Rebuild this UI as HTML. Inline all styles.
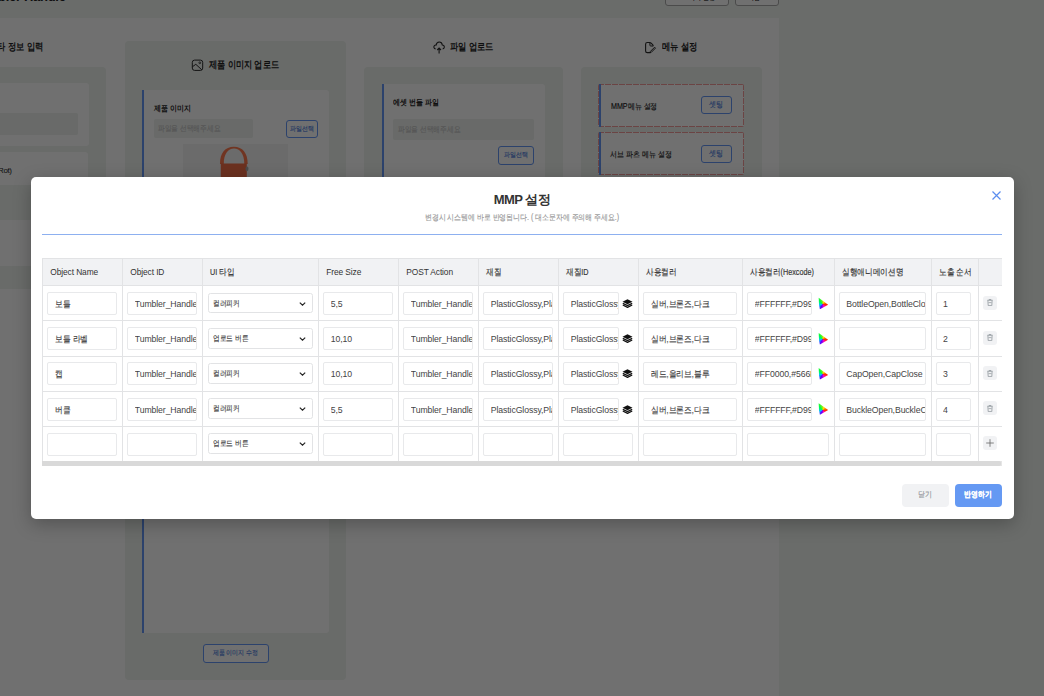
<!DOCTYPE html>
<html><head><meta charset="utf-8">
<style>
*{box-sizing:border-box;margin:0;padding:0}
html,body{width:1044px;height:696px;overflow:hidden}
body{font-family:"Liberation Sans",sans-serif;background:#f2f6f2;position:relative;color:#222}
.abs{position:absolute}
#page{position:absolute;left:0;top:0;width:1044px;height:696px}
.container{position:absolute;left:-20px;top:17.5px;width:799px;height:700px;background:#fff}
.sec{position:absolute;background:#eff3ef;border-radius:4px}
.card{position:absolute;background:#fff;border-left:2px solid #6497f5;border-radius:0 3px 3px 0}
.lbl{position:absolute;font-size:7.9px;font-weight:bold;color:#222;white-space:nowrap}
.fin{position:absolute;background:#eef1ee;border-radius:2px;font-size:7.7px;color:#c4c4c4;padding-left:4.5px;white-space:nowrap}
.obtn{position:absolute;border:1px solid #6497f5;border-radius:3px;background:#fff;color:#4f7fe0;font-size:7.5px;text-align:center;white-space:nowrap}
.stitle{position:absolute;font-size:11px;font-weight:bold;color:#222;white-space:nowrap}
.mcard{position:absolute;background:
 repeating-linear-gradient(90deg,#f39c9c 0 6px,transparent 6px 7px) 0 0/100% 1px no-repeat,
 repeating-linear-gradient(90deg,#f39c9c 0 6px,transparent 6px 7px) 0 100%/100% 1px no-repeat,
 repeating-linear-gradient(180deg,#f39c9c 0 6px,transparent 6px 7px) 0 0/1px 100% no-repeat,
 repeating-linear-gradient(180deg,#f39c9c 0 6px,transparent 6px 7px) 100% 0/1px 100% no-repeat,#fff;border-radius:2px}
.mcard::before{content:"";position:absolute;left:1px;top:0;bottom:0;width:2px;background:#6497f5}
#overlay{position:absolute;left:0;top:0;width:1044px;height:696px;background:rgba(0,0,0,0.56)}
#modal{position:absolute;left:31px;top:177px;width:983px;height:342px;background:#fff;border-radius:5px;box-shadow:0 5px 18px rgba(0,0,0,0.26)}

.hl{position:absolute;left:0;height:1px;background:#e2e3e5}
.vl{position:absolute;top:0;width:1px;background:#e2e3e5}
.th{position:absolute;font-size:8.4px;color:#333;white-space:nowrap;letter-spacing:-0.1px}
.inp{position:absolute;height:23px;border:1px solid #e8e9eb;border-radius:2px;background:#fff;overflow:hidden;white-space:nowrap;font-size:8.7px;color:#444;line-height:22px;padding-left:6.5px;letter-spacing:-0.1px}
.inp>span{display:block;overflow:hidden}
.sel{position:absolute;border:1px solid #e2e3e5;border-radius:2.5px;background:#fff;white-space:nowrap;font-size:7.8px;color:#555;line-height:19.5px;padding-left:3.5px;letter-spacing:0;color:#444}
.chev{position:absolute;right:6px;top:8px}
.ibtn{position:absolute;width:14.1px;height:14px;background:#f1f2f4;border-radius:3px;display:flex;align-items:center;justify-content:center}
.ico{position:absolute}
.kr{display:inline-block;transform-origin:0 50%;letter-spacing:0;-webkit-text-stroke:0.15px currentColor}
.lbl .kr,.stitle .kr{-webkit-text-stroke:0}
.cw{width:12px;height:13px;background:conic-gradient(from 0deg at 38% 55%, #ffe000 30deg, #ff2a00 95deg, #ff00c8 150deg, #5a00ff 205deg, #00c8ff 255deg, #00ff3c 320deg, #ffe000 390deg);clip-path:polygon(9% 5%, 88% 58%, 19% 94%, 12% 60%)}
.mtitle{position:absolute;left:0;width:984px;text-align:center;font-size:13px;font-weight:bold;color:#333;letter-spacing:-0.5px;white-space:nowrap}
.msub{position:absolute;left:0;width:984px;text-align:center;font-size:8.2px;color:#999;white-space:nowrap}
.btn{position:absolute;border-radius:4px;font-size:8px;text-align:center;white-space:nowrap}
</style></head>
<body>
<div id="page">
  <div class="abs" style="left:-60px;top:-11px;font-size:13px;font-weight:bold;color:#222;white-space:nowrap;letter-spacing:-0.3px">MMP Tumbler Handle</div>
  <div class="abs" style="left:665px;top:-14px;width:64px;height:19.5px;border:1px solid #aaa;border-radius:3px;background:#fff;font-size:7px;color:#222;text-align:right;padding-right:13px;line-height:22px;white-space:nowrap"><span class="kr" style="transform:scaleX(0.85);transform-origin:100% 50%">미리 설정</span></div>
  <div class="abs" style="left:735px;top:-14px;width:44px;height:19.5px;border:1px solid #aaa;border-radius:3px;background:#fff;font-size:7px;color:#222;text-align:center;padding-right:6px;line-height:22px;white-space:nowrap"><span class="kr" style="transform:scaleX(0.85);transform-origin:50% 50%">저장</span></div>
  <div class="container"></div>

  <!-- left section -->
  <div class="stitle" style="left:-11px;top:41px;font-size:9.5px"><span class="kr" style="transform:scaleX(0.83)">기타 정보 입력</span></div>
  <div class="sec" style="left:-40px;top:66.5px;width:146px;height:222px"></div>
  <div class="abs" style="left:-30px;top:83px;width:119px;height:63px;background:#fff;border-radius:3px"></div>
  <div class="abs" style="left:-20px;top:112.5px;width:97.5px;height:22.5px;background:#eef1ee;border-radius:2px"></div>
  <div class="abs" style="left:-30px;top:152px;width:118px;height:33px;background:#fff;border-radius:3px"></div>
  <div class="abs" style="left:-30px;top:220px;width:118px;height:46px;background:#fff;border-radius:3px"></div>
  <div class="abs" style="left:-2px;top:165.5px;font-size:8px;color:#222;white-space:nowrap;letter-spacing:-0.4px">Rot)</div>

  <!-- product image section -->
  <div class="sec" style="left:124.5px;top:41px;width:221.5px;height:638.5px"></div>
  <svg class="abs" style="left:191px;top:59px" width="13" height="13" viewBox="0 0 13 13"><rect x="1.3" y="1.1" width="10.4" height="10.3" rx="2.3" fill="none" stroke="#2a2a2a" stroke-width="1"/><path d="M1.5 7.7 L4.8 5.3 L10.8 10.8" fill="none" stroke="#2a2a2a" stroke-width="1"/><circle cx="8.8" cy="3.8" r="0.9" fill="none" stroke="#2a2a2a" stroke-width="0.8"/></svg>
  <div class="stitle" style="left:209px;top:58.5px;font-size:9.7px"><span class="kr" style="transform:scaleX(0.82)">제품 이미지 업로드</span></div>
  <div class="card" style="left:142px;top:89.5px;width:186.5px;height:543px"></div>
  <div class="lbl" style="left:153.5px;top:103px"><span class="kr" style="transform:scaleX(0.87)">제품 이미지</span></div>
  <div class="fin" style="left:153.5px;top:119px;width:99px;height:19px;line-height:19px"><span class="kr" style="transform:scaleX(0.84)">파일을 선택해주세요</span></div>
  <div class="obtn" style="left:285.5px;top:119.5px;width:32px;height:18px;line-height:16px;font-size:6.8px"><span class="kr" style="transform:scaleX(0.85);transform-origin:50% 50%">파일선택</span></div>
  <svg class="abs" style="left:183px;top:144px" width="105" height="370" viewBox="0 0 105 370"><rect width="105" height="370" fill="#f3f3f3"/>
    <path d="M37 20 C37 9 42 2.8 50.9 2.8 C59.5 2.8 64.7 9 64.7 20 L61.3 20 C61.3 10 57 4.6 51 4.6 C45 4.6 40.8 10 40.8 20 Z" fill="#ff7a4e"/>
    <rect x="37.8" y="19.5" width="26" height="40" fill="#f3704a"/>
    <ellipse cx="64" cy="24.8" rx="1.5" ry="2.4" fill="#aaa"/></svg>
  <div class="obtn" style="left:202.5px;top:644px;width:66.5px;height:18.5px;line-height:16.5px;font-size:6.8px"><span class="kr" style="transform:scaleX(0.85);transform-origin:50% 50%">제품 이미지 수정</span></div>

  <!-- file upload section -->
  <svg class="abs" style="left:432px;top:40px" width="14" height="14" viewBox="0 0 14 14"><path d="M3.6 8.9 C1.8 8.7 1.4 6.8 2.4 5.7 C3 5.1 3.8 5 4.1 5.1 C4.4 3.1 5.6 2 7.2 2 C8.8 2 10.1 3.2 10.3 5 C11.6 5 12.4 6 12.3 7.2 C12.2 8.3 11.5 8.8 10.7 8.9" fill="none" stroke="#2a2a2a" stroke-width="1.1"/><path d="M5.2 10 L7.1 8 L9 10 M7.1 8.3 V13.5" fill="none" stroke="#2a2a2a" stroke-width="1.1"/></svg>
  <div class="stitle" style="left:450px;top:41px;font-size:9.5px"><span class="kr" style="transform:scaleX(0.83)">파일 업로드</span></div>
  <div class="sec" style="left:364px;top:66.5px;width:199px;height:300px"></div>
  <div class="card" style="left:381.5px;top:84px;width:163px;height:200px"></div>
  <div class="lbl" style="left:393px;top:97px"><span class="kr" style="transform:scaleX(0.87)">에셋 번들 파일</span></div>
  <div class="fin" style="left:393px;top:119px;width:141px;height:21px;line-height:21px"><span class="kr" style="transform:scaleX(0.84)">파일을 선택해주세요</span></div>
  <div class="obtn" style="left:497.5px;top:146px;width:36.5px;height:18.5px;line-height:16.5px;font-size:6.8px"><span class="kr" style="transform:scaleX(0.85);transform-origin:50% 50%">파일선택</span></div>

  <!-- menu section -->
  <svg class="abs" style="left:644px;top:41px" width="13" height="13" viewBox="0 0 13 13"><path d="M6.6 11.6 H3.3 C2.2 11.6 1.6 11 1.6 9.9 V3.2 C1.6 2.1 2.2 1.5 3.3 1.5 H5.7 C6.3 1.5 6.7 1.7 7.1 2.1 L8.6 3.6 C9 4 9.2 4.4 9.2 5 V5.3" fill="none" stroke="#2a2a2a" stroke-width="1.1"/><path d="M5.9 1.8 V4.2 C5.9 4.8 6.3 5 6.8 5 H9" fill="none" stroke="#2a2a2a" stroke-width="1"/><path d="M10.6 6.2 L11.5 7.1 L7.3 11.3 L6.1 11.6 L6.4 10.4 Z" fill="none" stroke="#2a2a2a" stroke-width="1"/></svg>
  <div class="stitle" style="left:662px;top:41px;font-size:9.5px"><span class="kr" style="transform:scaleX(0.83)">메뉴 설정</span></div>
  <div class="sec" style="left:581px;top:66.5px;width:180.5px;height:300px"></div>
  <div class="mcard" style="left:598px;top:84px;width:146px;height:43px"></div>
  <div class="abs" style="left:611px;top:100.5px;font-size:8.2px;color:#222;white-space:nowrap"><span class="kr" style="transform:scaleX(0.87)">MMP메뉴 설정</span></div>
  <div class="obtn" style="left:700.5px;top:96px;width:31.5px;height:18px;line-height:16px"><span class="kr" style="transform:scaleX(0.87);transform-origin:50% 50%">셋팅</span></div>
  <div class="mcard" style="left:598px;top:132px;width:146px;height:43px"></div>
  <div class="abs" style="left:610px;top:149px;font-size:8.2px;color:#222;white-space:nowrap"><span class="kr" style="transform:scaleX(0.87)">서브 파츠 메뉴 설정</span></div>
  <div class="obtn" style="left:700.5px;top:144.5px;width:31.5px;height:18px;line-height:16px"><span class="kr" style="transform:scaleX(0.87);transform-origin:50% 50%">셋팅</span></div>
</div>
<div id="overlay"></div>
<div id="modal"><div style="position:absolute;left:-1px;top:0;width:984px;height:342px">
  <div class="mtitle" style="top:14px">MMP 설정</div>
  <div class="msub" style="top:35px"><span class="kr" style="transform:scaleX(0.86);transform-origin:50% 50%">변경시 시스템에 바로 반영됩니다. ( 대소문자에 주의해 주세요.)</span></div>
  <svg style="position:absolute;left:962px;top:14px" width="9" height="9" viewBox="0 0 9 9"><path d="M0.5 0.5 L8.5 8.5 M8.5 0.5 L0.5 8.5" stroke="#5b8def" stroke-width="1.2"/></svg>
  <div style="position:absolute;left:12px;top:57px;width:960px;height:1px;background:#8db0f0"></div>
  <div id="tbl" style="position:absolute;left:12.00px;top:81.00px;width:959.60px;height:208.30px;overflow:hidden">
<div style="position:absolute;left:0;top:0;width:961.00px;height:27.30px;background:#f1f2f4"></div>
<div class="hl" style="top:0.00px;width:961.00px"></div>
<div class="hl" style="top:27.30px;width:961.00px"></div>
<div class="hl" style="top:62.44px;width:961.00px"></div>
<div class="hl" style="top:97.58px;width:961.00px"></div>
<div class="hl" style="top:132.72px;width:961.00px"></div>
<div class="hl" style="top:167.86px;width:961.00px"></div>
<div class="hl" style="top:203.00px;width:961.00px"></div>
<div class="vl" style="left:0.00px;height:203.20px"></div>
<div class="vl" style="left:80.00px;height:203.20px"></div>
<div class="vl" style="left:160.00px;height:203.20px"></div>
<div class="vl" style="left:276.00px;height:203.20px"></div>
<div class="vl" style="left:356.00px;height:203.20px"></div>
<div class="vl" style="left:436.00px;height:203.20px"></div>
<div class="vl" style="left:516.00px;height:203.20px"></div>
<div class="vl" style="left:596.00px;height:203.20px"></div>
<div class="vl" style="left:700.00px;height:203.20px"></div>
<div class="vl" style="left:791.50px;height:203.20px"></div>
<div class="vl" style="left:889.00px;height:203.20px"></div>
<div class="vl" style="left:936.00px;height:203.20px"></div>
<div class="th" style="left:8.30px;top:1px;height:27.30px;line-height:27.30px">Object Name</div>
<div class="th" style="left:88.30px;top:1px;height:27.30px;line-height:27.30px">Object ID</div>
<div class="th" style="left:168.30px;top:1px;height:27.30px;line-height:27.30px"><span class="kr" style="font-size:8.5px;transform:scaleX(0.85)">UI 타입</span></div>
<div class="th" style="left:284.30px;top:1px;height:27.30px;line-height:27.30px">Free Size</div>
<div class="th" style="left:364.30px;top:1px;height:27.30px;line-height:27.30px">POST Action</div>
<div class="th" style="left:444.30px;top:1px;height:27.30px;line-height:27.30px"><span class="kr" style="font-size:8.5px;transform:scaleX(0.85)">재질</span></div>
<div class="th" style="left:524.30px;top:1px;height:27.30px;line-height:27.30px"><span class="kr" style="font-size:8.5px;transform:scaleX(0.85)">재질ID</span></div>
<div class="th" style="left:604.30px;top:1px;height:27.30px;line-height:27.30px"><span class="kr" style="font-size:8.5px;transform:scaleX(0.85)">사용컬러</span></div>
<div class="th" style="left:708.30px;top:1px;height:27.30px;line-height:27.30px"><span class="kr" style="font-size:8.5px;transform:scaleX(0.85)">사용컬러(Hexcode)</span></div>
<div class="th" style="left:799.80px;top:1px;height:27.30px;line-height:27.30px"><span class="kr" style="font-size:8.5px;transform:scaleX(0.85)">실행애니메이션명</span></div>
<div class="th" style="left:897.30px;top:1px;height:27.30px;line-height:27.30px"><span class="kr" style="font-size:8.5px;transform:scaleX(0.85)">노출 순서</span></div>
<div class="inp" style="left:5.30px;top:34.10px;width:70.20px"><span><span class="kr" style="font-size:8.5px;transform:scaleX(0.86)">보틀</span></span></div>
<div class="inp" style="left:85.30px;top:34.10px;width:70.20px"><span>Tumbler_Handle</span></div>
<div class="sel" style="left:166.20px;top:34.90px;width:104.80px;height:20.5px"><span><span class="kr" style="font-size:7.8px;transform:scaleX(0.84)">컬러피커</span></span><svg class="chev" width="7" height="4" viewBox="0 0 7 4"><path d="M0.8 0.6 L3.5 3.2 L6.2 0.6" fill="none" stroke="#222" stroke-width="1.15"/></svg></div>
<div class="inp" style="left:281.30px;top:34.10px;width:70.20px"><span>5,5</span></div>
<div class="inp" style="left:361.30px;top:34.10px;width:70.20px"><span>Tumbler_Handle</span></div>
<div class="inp" style="left:441.30px;top:34.10px;width:70.20px"><span>PlasticGlossy,PlasticMatte</span></div>
<div class="inp" style="left:521.30px;top:34.10px;width:55.70px"><span>PlasticGlossy</span></div>
<svg class="ico" style="left:580.30px;top:41.10px" width="11" height="9" viewBox="0 0 11 9"><path d="M5.5 0.3 L10.5 2.8 L5.5 5.3 L0.5 2.8 Z" fill="#111"/><path d="M0.8 4.3 L5.5 6.6 L10.2 4.3" fill="none" stroke="#111" stroke-width="1.3"/><path d="M0.8 6 L5.5 8.4 L10.2 6" fill="none" stroke="#111" stroke-width="1.3"/></svg>
<div class="inp" style="left:601.30px;top:34.10px;width:94.20px"><span><span class="kr" style="font-size:8.5px;transform:scaleX(0.86)">실버,브론즈,다크</span></span></div>
<div class="inp" style="left:705.30px;top:34.10px;width:65.00px"><span>#FFFFFF,#D9987A</span></div>
<div class="ico cw" style="left:775.60px;top:39.10px"></div>
<div class="inp" style="left:796.80px;top:34.10px;width:87.70px"><span>BottleOpen,BottleClose</span></div>
<div class="inp" style="left:893.60px;top:34.10px;width:35.20px"><span>1</span></div>
<div class="ibtn" style="left:941.30px;top:37.80px"><svg width="6" height="7" viewBox="0 0 6 7"><path d="M0.3 1.3 H5.7 M2 1.2 V0.5 H4 V1.2 M0.9 1.5 L1.2 6.6 H4.8 L5.1 1.5" fill="none" stroke="#9aa0a6" stroke-width="0.9"/><path d="M1.5 3.6 H4.5" stroke="#9aa0a6" stroke-width="0.8"/></svg></div>
<div class="inp" style="left:5.30px;top:69.24px;width:70.20px"><span><span class="kr" style="font-size:8.5px;transform:scaleX(0.86)">보틀 라벨</span></span></div>
<div class="inp" style="left:85.30px;top:69.24px;width:70.20px"><span>Tumbler_Handle</span></div>
<div class="sel" style="left:166.20px;top:70.04px;width:104.80px;height:20.5px"><span><span class="kr" style="font-size:7.8px;transform:scaleX(0.84)">업로드 버튼</span></span><svg class="chev" width="7" height="4" viewBox="0 0 7 4"><path d="M0.8 0.6 L3.5 3.2 L6.2 0.6" fill="none" stroke="#222" stroke-width="1.15"/></svg></div>
<div class="inp" style="left:281.30px;top:69.24px;width:70.20px"><span>10,10</span></div>
<div class="inp" style="left:361.30px;top:69.24px;width:70.20px"><span>Tumbler_Handle</span></div>
<div class="inp" style="left:441.30px;top:69.24px;width:70.20px"><span>PlasticGlossy,PlasticMatte</span></div>
<div class="inp" style="left:521.30px;top:69.24px;width:55.70px"><span>PlasticGlossy</span></div>
<svg class="ico" style="left:580.30px;top:76.24px" width="11" height="9" viewBox="0 0 11 9"><path d="M5.5 0.3 L10.5 2.8 L5.5 5.3 L0.5 2.8 Z" fill="#111"/><path d="M0.8 4.3 L5.5 6.6 L10.2 4.3" fill="none" stroke="#111" stroke-width="1.3"/><path d="M0.8 6 L5.5 8.4 L10.2 6" fill="none" stroke="#111" stroke-width="1.3"/></svg>
<div class="inp" style="left:601.30px;top:69.24px;width:94.20px"><span><span class="kr" style="font-size:8.5px;transform:scaleX(0.86)">실버,브론즈,다크</span></span></div>
<div class="inp" style="left:705.30px;top:69.24px;width:65.00px"><span>#FFFFFF,#D9987A</span></div>
<div class="ico cw" style="left:775.60px;top:74.24px"></div>
<div class="inp" style="left:796.80px;top:69.24px;width:87.70px"><span></span></div>
<div class="inp" style="left:893.60px;top:69.24px;width:35.20px"><span>2</span></div>
<div class="ibtn" style="left:941.30px;top:72.94px"><svg width="6" height="7" viewBox="0 0 6 7"><path d="M0.3 1.3 H5.7 M2 1.2 V0.5 H4 V1.2 M0.9 1.5 L1.2 6.6 H4.8 L5.1 1.5" fill="none" stroke="#9aa0a6" stroke-width="0.9"/><path d="M1.5 3.6 H4.5" stroke="#9aa0a6" stroke-width="0.8"/></svg></div>
<div class="inp" style="left:5.30px;top:104.38px;width:70.20px"><span><span class="kr" style="font-size:8.5px;transform:scaleX(0.86)">캡</span></span></div>
<div class="inp" style="left:85.30px;top:104.38px;width:70.20px"><span>Tumbler_Handle</span></div>
<div class="sel" style="left:166.20px;top:105.18px;width:104.80px;height:20.5px"><span><span class="kr" style="font-size:7.8px;transform:scaleX(0.84)">컬러피커</span></span><svg class="chev" width="7" height="4" viewBox="0 0 7 4"><path d="M0.8 0.6 L3.5 3.2 L6.2 0.6" fill="none" stroke="#222" stroke-width="1.15"/></svg></div>
<div class="inp" style="left:281.30px;top:104.38px;width:70.20px"><span>10,10</span></div>
<div class="inp" style="left:361.30px;top:104.38px;width:70.20px"><span>Tumbler_Handle</span></div>
<div class="inp" style="left:441.30px;top:104.38px;width:70.20px"><span>PlasticGlossy,PlasticMatte</span></div>
<div class="inp" style="left:521.30px;top:104.38px;width:55.70px"><span>PlasticGlossy</span></div>
<svg class="ico" style="left:580.30px;top:111.38px" width="11" height="9" viewBox="0 0 11 9"><path d="M5.5 0.3 L10.5 2.8 L5.5 5.3 L0.5 2.8 Z" fill="#111"/><path d="M0.8 4.3 L5.5 6.6 L10.2 4.3" fill="none" stroke="#111" stroke-width="1.3"/><path d="M0.8 6 L5.5 8.4 L10.2 6" fill="none" stroke="#111" stroke-width="1.3"/></svg>
<div class="inp" style="left:601.30px;top:104.38px;width:94.20px"><span><span class="kr" style="font-size:8.5px;transform:scaleX(0.86)">레드,올리브,블루</span></span></div>
<div class="inp" style="left:705.30px;top:104.38px;width:65.00px"><span>#FF0000,#566B3A</span></div>
<div class="ico cw" style="left:775.60px;top:109.38px"></div>
<div class="inp" style="left:796.80px;top:104.38px;width:87.70px"><span>CapOpen,CapClose</span></div>
<div class="inp" style="left:893.60px;top:104.38px;width:35.20px"><span>3</span></div>
<div class="ibtn" style="left:941.30px;top:108.08px"><svg width="6" height="7" viewBox="0 0 6 7"><path d="M0.3 1.3 H5.7 M2 1.2 V0.5 H4 V1.2 M0.9 1.5 L1.2 6.6 H4.8 L5.1 1.5" fill="none" stroke="#9aa0a6" stroke-width="0.9"/><path d="M1.5 3.6 H4.5" stroke="#9aa0a6" stroke-width="0.8"/></svg></div>
<div class="inp" style="left:5.30px;top:139.52px;width:70.20px"><span><span class="kr" style="font-size:8.5px;transform:scaleX(0.86)">버클</span></span></div>
<div class="inp" style="left:85.30px;top:139.52px;width:70.20px"><span>Tumbler_Handle</span></div>
<div class="sel" style="left:166.20px;top:140.32px;width:104.80px;height:20.5px"><span><span class="kr" style="font-size:7.8px;transform:scaleX(0.84)">컬러피커</span></span><svg class="chev" width="7" height="4" viewBox="0 0 7 4"><path d="M0.8 0.6 L3.5 3.2 L6.2 0.6" fill="none" stroke="#222" stroke-width="1.15"/></svg></div>
<div class="inp" style="left:281.30px;top:139.52px;width:70.20px"><span>5,5</span></div>
<div class="inp" style="left:361.30px;top:139.52px;width:70.20px"><span>Tumbler_Handle</span></div>
<div class="inp" style="left:441.30px;top:139.52px;width:70.20px"><span>PlasticGlossy,PlasticMatte</span></div>
<div class="inp" style="left:521.30px;top:139.52px;width:55.70px"><span>PlasticGlossy</span></div>
<svg class="ico" style="left:580.30px;top:146.52px" width="11" height="9" viewBox="0 0 11 9"><path d="M5.5 0.3 L10.5 2.8 L5.5 5.3 L0.5 2.8 Z" fill="#111"/><path d="M0.8 4.3 L5.5 6.6 L10.2 4.3" fill="none" stroke="#111" stroke-width="1.3"/><path d="M0.8 6 L5.5 8.4 L10.2 6" fill="none" stroke="#111" stroke-width="1.3"/></svg>
<div class="inp" style="left:601.30px;top:139.52px;width:94.20px"><span><span class="kr" style="font-size:8.5px;transform:scaleX(0.86)">실버,브론즈,다크</span></span></div>
<div class="inp" style="left:705.30px;top:139.52px;width:65.00px"><span>#FFFFFF,#D9987A</span></div>
<div class="ico cw" style="left:775.60px;top:144.52px"></div>
<div class="inp" style="left:796.80px;top:139.52px;width:87.70px"><span>BuckleOpen,BuckleClose</span></div>
<div class="inp" style="left:893.60px;top:139.52px;width:35.20px"><span>4</span></div>
<div class="ibtn" style="left:941.30px;top:143.22px"><svg width="6" height="7" viewBox="0 0 6 7"><path d="M0.3 1.3 H5.7 M2 1.2 V0.5 H4 V1.2 M0.9 1.5 L1.2 6.6 H4.8 L5.1 1.5" fill="none" stroke="#9aa0a6" stroke-width="0.9"/><path d="M1.5 3.6 H4.5" stroke="#9aa0a6" stroke-width="0.8"/></svg></div>
<div class="inp" style="left:5.30px;top:174.66px;width:70.20px"><span></span></div>
<div class="inp" style="left:85.30px;top:174.66px;width:70.20px"><span></span></div>
<div class="sel" style="left:166.20px;top:175.46px;width:104.80px;height:20.5px"><span><span class="kr" style="font-size:7.8px;transform:scaleX(0.84)">업로드 버튼</span></span><svg class="chev" width="7" height="4" viewBox="0 0 7 4"><path d="M0.8 0.6 L3.5 3.2 L6.2 0.6" fill="none" stroke="#222" stroke-width="1.15"/></svg></div>
<div class="inp" style="left:281.30px;top:174.66px;width:70.20px"><span></span></div>
<div class="inp" style="left:361.30px;top:174.66px;width:70.20px"><span></span></div>
<div class="inp" style="left:441.30px;top:174.66px;width:70.20px"><span></span></div>
<div class="inp" style="left:521.30px;top:174.66px;width:70.20px"><span></span></div>
<div class="inp" style="left:601.30px;top:174.66px;width:94.20px"><span></span></div>
<div class="inp" style="left:705.30px;top:174.66px;width:81.70px"><span></span></div>
<div class="inp" style="left:796.80px;top:174.66px;width:87.70px"><span></span></div>
<div class="inp" style="left:893.60px;top:174.66px;width:35.20px"><span></span></div>
<div class="ibtn" style="left:941.30px;top:178.36px"><svg width="10" height="10" viewBox="0 0 10 10"><path d="M5 1.2 V8.8 M1.2 5 H8.8" stroke="#666" stroke-width="0.8"/></svg></div>
<div style="position:absolute;left:0;top:203.20px;width:961.00px;height:5.1px;background:#e6e6e6"></div>
<div style="position:absolute;left:0;top:203.20px;width:958.60px;height:5.1px;background:#d9d9d9;border-radius:0 2px 2px 0"></div>
</div>
  <div class="btn" style="left:872px;top:307px;width:46.7px;height:22.8px;line-height:22.8px;background:#f1f2f4;color:#8f9298"><span class="kr" style="transform:scaleX(0.87);transform-origin:50% 50%">닫기</span></div>
  <div class="btn" style="left:925px;top:307px;width:46.7px;height:22.8px;line-height:22.8px;background:#6599f3;color:#fff;font-weight:bold"><span class="kr" style="transform:scaleX(0.85);transform-origin:50% 50%">반영하기</span></div>
</div></div>
</body></html>
